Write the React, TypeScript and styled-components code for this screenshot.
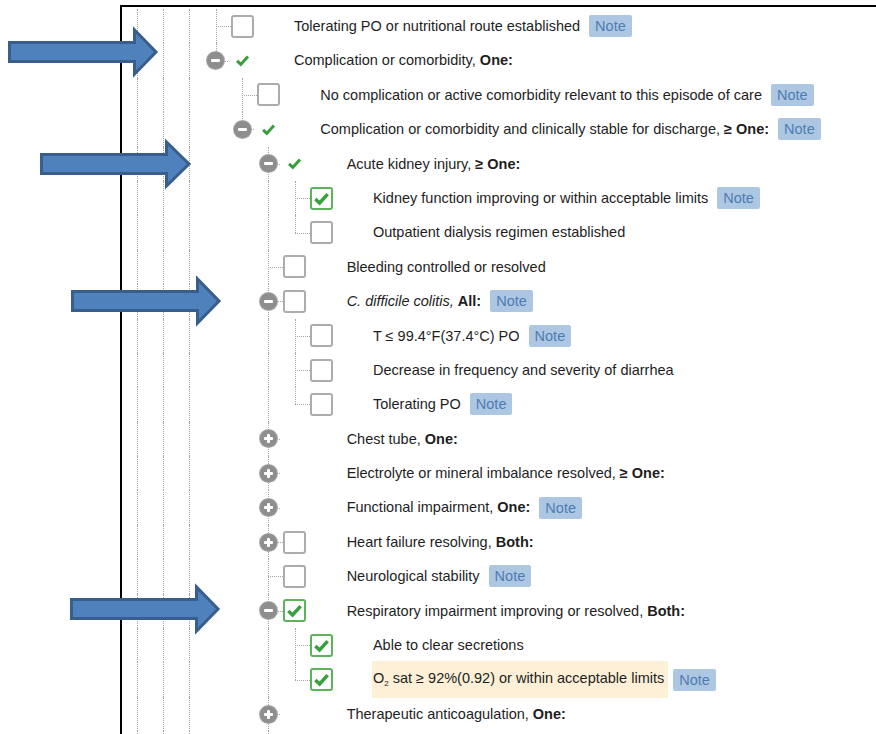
import React from 'react';
import styled, { createGlobalStyle, css } from 'styled-components';

type Box = 'none' | 'empty' | 'checked' | 'mark';
type Node = {
  label: React.ReactNode;
  box: Box;
  expander?: 'minus' | 'plus';
  note?: boolean;
  highlight?: boolean;
  children?: Node[];
};

const Global = createGlobalStyle`
  html, body { margin: 0; padding: 0; background: #fff; overflow: hidden; }
  body { font-family: "Liberation Sans", Arial, sans-serif; }
`;

const Page = styled.div`
  position: relative;
  width: 876px;
  height: 734px;
  overflow: hidden;
  background: #fff;
  padding: 5px 0 0 120px;
  box-sizing: border-box;
`;

const Frame = styled.div`
  border-top: 2px solid #000;
  border-left: 2px solid #000;
  height: 100%;
  padding: 2px 0 0 1.83px;
  box-sizing: border-box;
`;

const Row = styled.div`
  display: flex;
  align-items: center;
  height: 34.4px;
`;

const Guide = styled.div<{ $v: 'none' | 'full' | 'top' }>`
  position: relative;
  flex: 0 0 26.33px;
  align-self: stretch;
  display: flex;
  align-items: center;
  justify-content: center;
  &::before {
    content: '';
    display: ${(p) => (p.$v === 'none' ? 'none' : 'block')};
    position: absolute;
    left: 13px;
    top: 0;
    height: ${(p) => (p.$v === 'top' ? '50%' : '100%')};
    border-left: 1px dotted #a6a6a6;
  }
`;

const Connector = styled(Guide)<{ $stub: number }>`
  &::after {
    content: '';
    position: absolute;
    left: 13px;
    top: 50%;
    width: ${(p) => p.$stub}px;
    border-top: 1px dotted #a6a6a6;
  }
`;

const Expander = styled.span`
  position: relative;
  z-index: 1;
  width: 17px;
  height: 17px;
  border-radius: 50%;
  background: #8e8e8e;
  box-shadow: 0 0 0 1px #a8a8a8;
  display: flex;
  align-items: center;
  justify-content: center;
`;

const Bar = styled.span<{ $vertical?: boolean }>`
  position: absolute;
  background: #fff;
  border-radius: 1px;
  width: ${(p) => (p.$vertical ? 3 : 9)}px;
  height: ${(p) => (p.$vertical ? 9 : 3)}px;
`;

const CheckBox = styled.span<{ $checked: boolean }>`
  position: relative;
  z-index: 1;
  box-sizing: border-box;
  width: 23px;
  height: 23px;
  border: 2px solid ${(p) => (p.$checked ? '#5cb35c' : '#acacac')};
  border-radius: 3px;
  background: #fff;
  display: flex;
  align-items: center;
  justify-content: center;
`;

const Label = styled.span<{ $hl?: boolean }>`
  display: block;
  margin-left: 38.5px;
  font-size: 14.5px;
  line-height: 34.4px;
  color: #1e1e1e;
  white-space: nowrap;
  b { font-weight: bold; }
  i { font-style: italic; }
  ${(p) =>
    p.$hl &&
    css`
      background: #fdf0d6;
      padding: 0 4px 0 1px;
      margin-left: 37.5px;
    `}
`;

const Sub = styled.span`
  font-size: 8px;
  position: relative;
  top: 3px;
`;

const Note = styled.span<{ $tight?: boolean }>`
  margin-left: ${(p) => (p.$tight ? 5 : 9)}px;
  height: 22px;
  padding: 0 6px;
  display: inline-flex;
  align-items: center;
  background: #adc7e3;
  color: #4e7cb2;
  font-size: 14.5px;
  border-radius: 2px;
  white-space: nowrap;
`;

const Overlay = styled.svg`
  position: absolute;
  left: 0;
  top: 0;
  pointer-events: none;
  z-index: 5;
`;

const Check = ({ size, color }: { size: number; color: string }) => (
  <svg width={size} height={size} viewBox="0 0 16 16">
    <path d="M2.2 8.4 L6.2 12.2 L13.8 3.8" fill="none" stroke={color} strokeWidth={3.2} strokeLinejoin="miter" />
  </svg>
);

const tree: Node[] = [
  { label: 'Tolerating PO or nutritional route established', box: 'empty', note: true },
  {
    label: <>Complication or comorbidity, <b>One:</b></>,
    box: 'mark',
    expander: 'minus',
    children: [
      { label: 'No complication or active comorbidity relevant to this episode of care', box: 'empty', note: true },
      {
        label: <>Complication or comorbidity and clinically stable for discharge, <b>≥ One:</b></>,
        box: 'mark',
        expander: 'minus',
        note: true,
        children: [
          {
            label: <>Acute kidney injury, <b>≥ One:</b></>,
            box: 'mark',
            expander: 'minus',
            children: [
              { label: 'Kidney function improving or within acceptable limits', box: 'checked', note: true },
              { label: 'Outpatient dialysis regimen established', box: 'empty' },
            ],
          },
          { label: 'Bleeding controlled or resolved', box: 'empty' },
          {
            label: <><i>C. difficile colitis,</i> <b>All:</b></>,
            box: 'empty',
            expander: 'minus',
            note: true,
            children: [
              { label: 'T ≤ 99.4°F(37.4°C) PO', box: 'empty', note: true },
              { label: 'Decrease in frequency and severity of diarrhea', box: 'empty' },
              { label: 'Tolerating PO', box: 'empty', note: true },
            ],
          },
          { label: <>Chest tube, <b>One:</b></>, box: 'none', expander: 'plus' },
          { label: <>Electrolyte or mineral imbalance resolved, <b>≥ One:</b></>, box: 'none', expander: 'plus' },
          { label: <>Functional impairment, <b>One:</b></>, box: 'none', expander: 'plus', note: true },
          { label: <>Heart failure resolving, <b>Both:</b></>, box: 'empty', expander: 'plus' },
          { label: 'Neurological stability', box: 'empty', note: true },
          {
            label: <>Respiratory impairment improving or resolved, <b>Both:</b></>,
            box: 'checked',
            expander: 'minus',
            children: [
              { label: 'Able to clear secretions', box: 'checked' },
              {
                label: <>O<Sub>2</Sub> sat ≥ 92%(0.92) or within acceptable limits</>,
                box: 'checked',
                note: true,
                highlight: true,
              },
            ],
          },
          { label: <>Therapeutic anticoagulation, <b>One:</b></>, box: 'none', expander: 'plus' },
          { label: '', box: 'empty' },
        ],
      },
    ],
  },
];

type Flat = { node: Node; guides: boolean[]; last: boolean };

function flatten(nodes: Node[], guides: boolean[], out: Flat[]) {
  nodes.forEach((node, i) => {
    const last = i === nodes.length - 1;
    out.push({ node, guides, last });
    if (node.children) flatten(node.children, guides.concat(!last), out);
  });
  return out;
}

const rows = flatten(tree, [true, true, true], []);

function TreeRow({ item }: { item: Flat }) {
  const { node, guides, last } = item;
  const hasBox = node.box === 'empty' || node.box === 'checked';
  const stub = node.expander && !hasBox ? 12 : 15;
  return (
    <Row>
      {guides.map((g, i) => (
        <Guide key={i} $v={g ? 'full' : 'none'} />
      ))}
      <Connector $v={last ? 'top' : 'full'} $stub={stub}>
        {node.expander && (
          <Expander>
            <Bar />
            {node.expander === 'plus' && <Bar $vertical />}
          </Expander>
        )}
      </Connector>
      <Guide $v="none">
        {hasBox && (
          <CheckBox $checked={node.box === 'checked'}>
            {node.box === 'checked' && <Check size={17} color="#36a03a" />}
          </CheckBox>
        )}
        {node.box === 'mark' && <Check size={15} color="#3a9d3a" />}
      </Guide>
      <Label $hl={node.highlight}>{node.label}</Label>
      {node.note && <Note $tight={node.highlight}>Note</Note>}
    </Row>
  );
}

const arrows = [
  { L: 8, T: 159, C: 52, B: 133 },
  { L: 40, T: 192, C: 164, B: 165 },
  { L: 71, T: 222, C: 301, B: 196 },
  { L: 70, T: 221, C: 609, B: 195 },
];

function arrowPoints(a: { L: number; T: number; C: number; B: number }) {
  const b = 11;
  const h = 25;
  const s = 1.5;
  const pts = [
    [a.L + s, a.C - b + s],
    [a.B + s, a.C - b + s],
    [a.B + s, a.C - h + 2 * s],
    [a.T - 2 * s, a.C],
    [a.B + s, a.C + h - 2 * s],
    [a.B + s, a.C + b - s],
    [a.L + s, a.C + b - s],
  ];
  return pts.map((p) => p.join(',')).join(' ');
}

export default function App() {
  return (
    <>
      <Global />
      <Page>
        <Frame>
          {rows.map((r, i) => (
            <TreeRow key={i} item={r} />
          ))}
        </Frame>
        <Overlay width={876} height={734} viewBox="0 0 876 734">
          {arrows.map((a, i) => (
            <polygon key={i} points={arrowPoints(a)} fill="#4f81bd" stroke="#385e8c" strokeWidth={3} strokeLinejoin="miter" />
          ))}
        </Overlay>
      </Page>
    </>
  );
}
